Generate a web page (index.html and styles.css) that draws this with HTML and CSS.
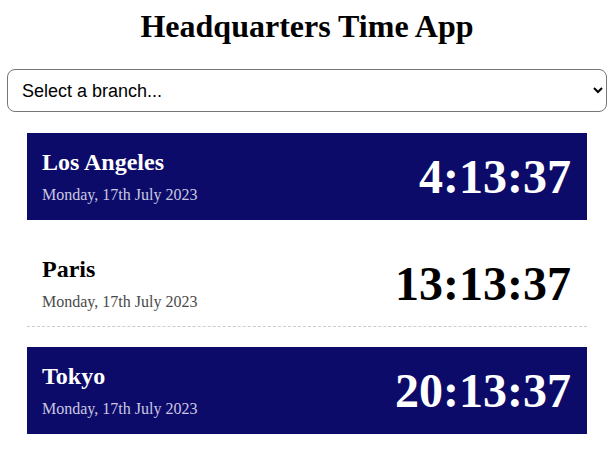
FILE: index.html
```html
<!DOCTYPE html>
<html lang="en">
<head>
<meta charset="utf-8">
<title>Headquarters Time App</title>
<link rel="stylesheet" href="styles.css">
</head>
<body>
<div class="app">
  <h1 class="title">Headquarters Time App</h1>
  <div class="picker">
    <select class="branch-select">
      <option>Select a branch...</option>
      <option>Los Angeles</option>
      <option>Paris</option>
      <option>Tokyo</option>
    </select>
  </div>
  <ul class="clock-list">
    <li class="clock clock--dark">
      <div class="clock-info">
        <h2 class="city">Los Angeles</h2>
        <p class="date">Monday, 17th July 2023</p>
      </div>
      <div class="time">4:13:37</div>
    </li>
    <li class="clock">
      <div class="clock-info">
        <h2 class="city">Paris</h2>
        <p class="date">Monday, 17th July 2023</p>
      </div>
      <div class="time">13:13:37</div>
    </li>
    <li class="clock clock--dark">
      <div class="clock-info">
        <h2 class="city">Tokyo</h2>
        <p class="date">Monday, 17th July 2023</p>
      </div>
      <div class="time">20:13:37</div>
    </li>
  </ul>
</div>
</body>
</html>
```
FILE: styles.css
```css
html, body {
  margin: 0;
  padding: 0;
  background: #ffffff;
}

body {
  font-family: "Liberation Serif", "Times New Roman", serif;
  color: #000;
}

.app {
  padding: 0 7px;
}

.title {
  margin: 8px 0 24px;
  font-size: 32px;
  font-weight: bold;
  text-align: center;
  line-height: normal;
}

.picker {
  display: flex;
}

.branch-select {
  width: 100%;
  height: 43px;
  margin: 0 0 21px;
  padding: 0 10px;
  font-family: "Liberation Sans", Arial, sans-serif;
  font-size: 18px;
  color: #000;
  background: #fff;
  border: 1px solid #767676;
  border-radius: 8px;
}

.clock-list {
  list-style: none;
  margin: 0 20px;
  padding: 0;
  display: flex;
  flex-direction: column;
  gap: 20px;
}

.clock {
  display: flex;
  align-items: center;
  justify-content: space-between;
  padding: 16px 16px 15px 15px;
  border-bottom: 1px dashed #cccccc;
}

.clock--dark {
  background: #0d0b6a;
  color: #ffffff;
  border-bottom-color: #0d0b6a;
  border-bottom-style: solid;
}

.clock-info {
  display: flex;
  flex-direction: column;
}

.city {
  margin: 0 0 10px;
  font-size: 24px;
  font-weight: bold;
  line-height: normal;
}

.date {
  margin: 0;
  font-size: 16px;
  line-height: normal;
  color: #4a4a4a;
}

.clock--dark .date {
  color: #c9c8e0;
}

.time {
  font-size: 48px;
  font-weight: bold;
  line-height: normal;
}
```
